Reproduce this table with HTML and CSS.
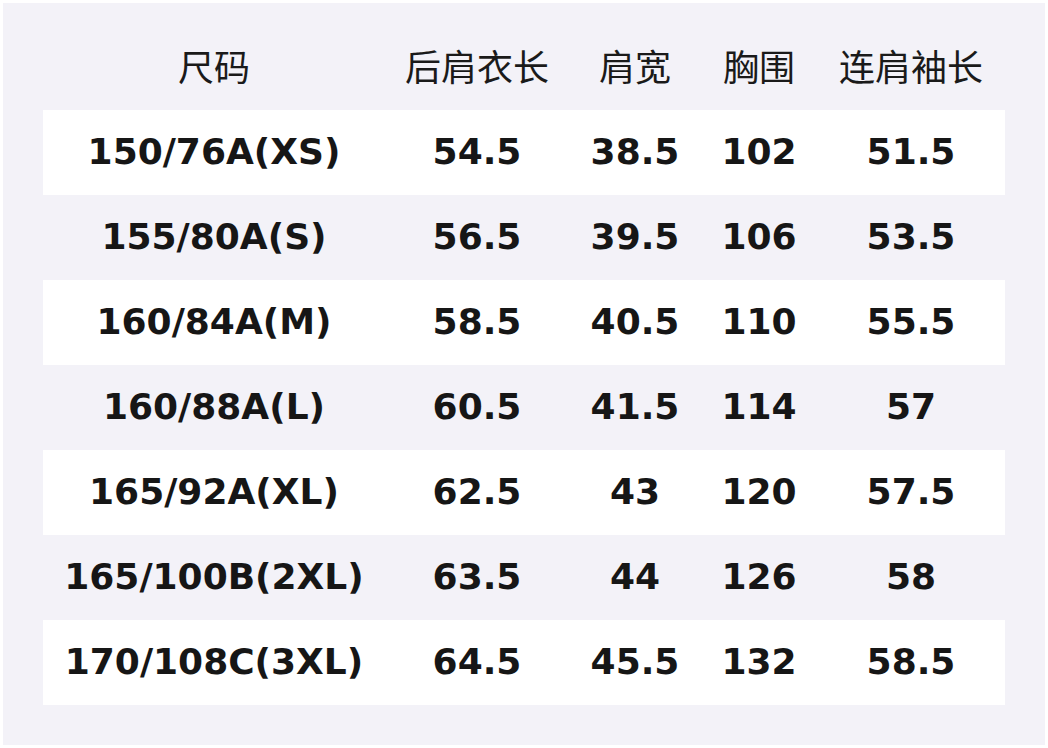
FILE: index.html
```html
<!DOCTYPE html>
<html lang="zh">
<head>
<meta charset="utf-8">
<title>尺码表</title>
<link rel="stylesheet" href="styles.css">
</head>
<body>
<div class="sheet">
  <div class="table">
    <div class="row head">
      <div class="cell">尺码</div><div class="cell">后肩衣长</div><div class="cell">肩宽</div><div class="cell">胸围</div><div class="cell">连肩袖长</div>
    </div>
    <div class="row odd">
      <div class="cell">150/76A(XS)</div><div class="cell">54.5</div><div class="cell">38.5</div><div class="cell">102</div><div class="cell">51.5</div>
    </div>
    <div class="row even">
      <div class="cell">155/80A(S)</div><div class="cell">56.5</div><div class="cell">39.5</div><div class="cell">106</div><div class="cell">53.5</div>
    </div>
    <div class="row odd">
      <div class="cell">160/84A(M)</div><div class="cell">58.5</div><div class="cell">40.5</div><div class="cell">110</div><div class="cell">55.5</div>
    </div>
    <div class="row even">
      <div class="cell">160/88A(L)</div><div class="cell">60.5</div><div class="cell">41.5</div><div class="cell">114</div><div class="cell">57</div>
    </div>
    <div class="row odd">
      <div class="cell">165/92A(XL)</div><div class="cell">62.5</div><div class="cell">43</div><div class="cell">120</div><div class="cell">57.5</div>
    </div>
    <div class="row even">
      <div class="cell">165/100B(2XL)</div><div class="cell">63.5</div><div class="cell">44</div><div class="cell">126</div><div class="cell">58</div>
    </div>
    <div class="row odd">
      <div class="cell">170/108C(3XL)</div><div class="cell">64.5</div><div class="cell">45.5</div><div class="cell">132</div><div class="cell">58.5</div>
    </div>
  </div>
</div>
</body>
</html>
```

FILE: styles.css
```css
html, body {
  margin: 0;
  padding: 0;
  background: #ffffff;
}
body {
  width: 1048px;
  height: 748px;
  padding: 3px;
  box-sizing: border-box;
}
.sheet {
  width: 1042px;
  height: 742px;
  box-sizing: border-box;
  background: #f3f2f8;
  padding: 22px 40px 0 40px;
}
.table {
  display: flex;
  flex-direction: column;
}
.row {
  display: grid;
  grid-template-columns: 342px 184px 132px 116px 188px;
  height: 85px;
  align-items: center;
}
.row.odd {
  background: #ffffff;
}
.cell {
  text-align: center;
  white-space: nowrap;
  color: #161616;
  font-family: "DejaVu Sans", "Noto Sans CJK SC", sans-serif;
  font-weight: bold;
  font-size: 36px;
  line-height: 1;
  padding-bottom: 2px;
}
.head .cell {
  font-family: "Noto Sans CJK SC", sans-serif;
  font-weight: normal;
  font-size: 36px;
  color: #1a1a1a;
  padding-bottom: 6px;
}
```
